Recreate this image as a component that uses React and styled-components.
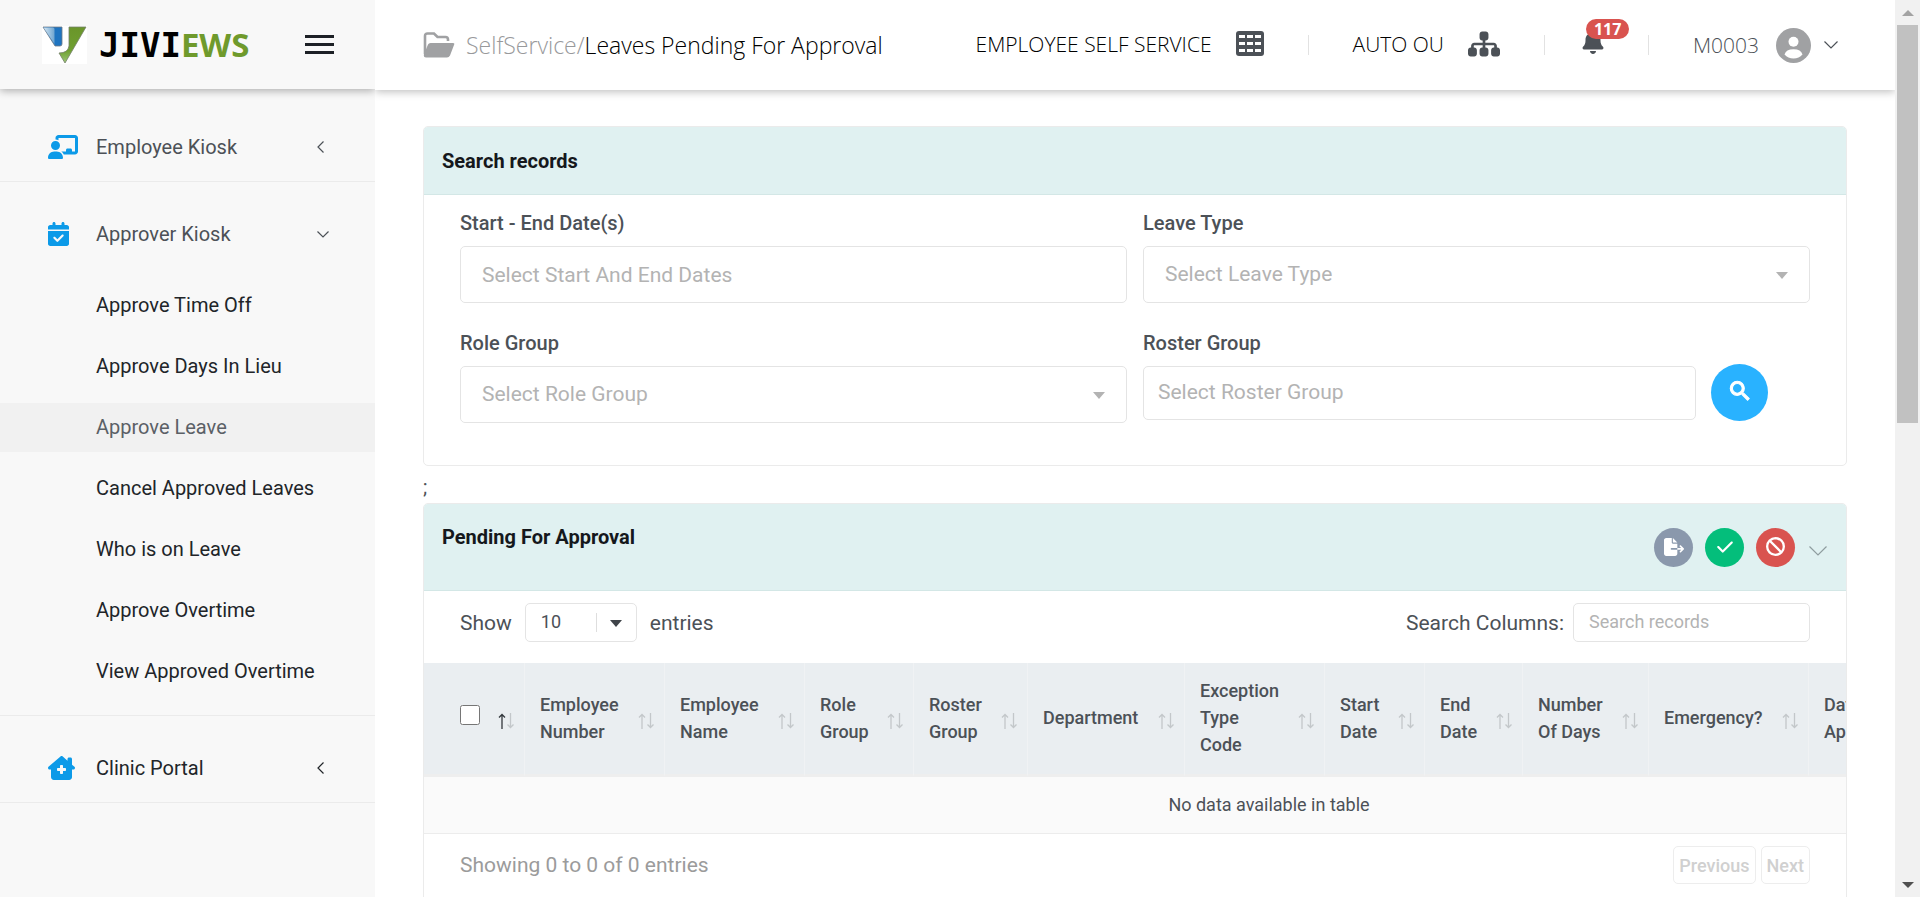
import React from "react";
import styled, { createGlobalStyle } from "styled-components";
import {
  FaChalkboardUser,
  FaCalendarCheck,
  FaHouseChimneyMedical,
  FaSitemap,
  FaBell,
  FaFileExport,
  FaCheck,
  FaBan,
} from "react-icons/fa6";
import { MdSearch } from "react-icons/md";

const GlobalStyle = createGlobalStyle`
  *, *::before, *::after { box-sizing: border-box; }
  html, body { margin: 0; padding: 0; }
  body {
    font-family: Roboto, "Liberation Sans", sans-serif;
    font-size: 20px;
    color: #4c5157;
    background: #fff;
  }
  button, input, select { font-family: inherit; }
  a { color: inherit; text-decoration: none; }
`;

const light = `"Open Sans", "Noto Sans", sans-serif`;

const Shell = styled.div`
  display: flex;
  height: 100vh;
  overflow: hidden;
`;

/* ---------- Sidebar ---------- */

const Sidebar = styled.aside`
  flex: 0 0 375px;
  background: #f8f8f8;
`;

const Brand = styled.div`
  display: flex;
  align-items: center;
  justify-content: space-between;
  height: 89px;
  padding: 0 41px 0 42px;
  box-shadow: 0 2px 8px rgba(0, 0, 0, 0.3);
  clip-path: inset(0 0 -12px 0);
`;

const Logo = styled.a`
  display: flex;
  align-items: center;
  gap: 12px;
  font-family: "DejaVu Sans Mono", monospace;
  font-size: 34px;
  font-weight: 700;
  line-height: 40px;
  color: #000;
`;

const LogoAccent = styled.span`
  font-family: "Noto Sans", "Open Sans", sans-serif;
  font-size: 33px;
  color: #6f9a2c;
`;

const MenuButton = styled.button`
  display: flex;
  flex-direction: column;
  gap: 5px;
  padding: 0;
  border: 0;
  background: none;
`;

const MenuBar = styled.span`
  width: 29px;
  height: 3px;
  background: #1d2026;
`;

const Nav = styled.nav`
  padding-top: 6px;
`;

const Group = styled.div`
  padding: 34px 0 ${(p) => (p.$open ? 19 : 16)}px;
  border-bottom: 1px solid #ebebeb;
`;

const GroupButton = styled.button`
  display: flex;
  align-items: center;
  width: 100%;
  height: 36px;
  padding: 0 46px 0 48px;
  border: 0;
  background: none;
  font-size: 20px;
  color: ${(p) => (p.$strong ? "#212529" : "#4c5157")};
  text-align: left;
`;

const GroupIcon = styled.span`
  display: flex;
  flex: 0 0 48px;
  color: #0c9ae8;
  svg {
    width: ${(p) => p.$w}px;
    height: 24px;
  }
`;

const GroupLabel = styled.span`
  flex: 1;
`;

const GroupArrow = styled.span`
  display: flex;
  flex: 0 0 12px;
`;

const SubList = styled.ul`
  display: flex;
  flex-direction: column;
  gap: 12px;
  margin: 29px 0 0;
  padding: 0;
  list-style: none;
`;

const SubLink = styled.a`
  display: block;
  padding-left: 96px;
  line-height: 49px;
  font-size: 20px;
  color: ${(p) => (p.$active ? "#5b6066" : "#212529")};
  background: ${(p) => (p.$active ? "#f1f1f1" : "transparent")};
`;

/* ---------- Top bar ---------- */

const Main = styled.main`
  flex: 1;
  min-width: 0;
`;

const TopBar = styled.header`
  display: flex;
  align-items: center;
  justify-content: space-between;
  height: 90px;
  padding: 0 57px 0 48px;
  box-shadow: 0 2px 8px rgba(0, 0, 0, 0.25);
  clip-path: inset(0 0 -12px 0);
`;

const Crumbs = styled.div`
  display: flex;
  align-items: center;
  gap: 11px;
  font-family: ${light};
  font-size: 23px;
  font-weight: 300;
  color: #000;
`;

const CrumbParent = styled.a`
  color: #98999b;
`;

const TopNav = styled.div`
  display: flex;
  align-items: center;
  font-family: ${light};
  font-weight: 300;
`;

const TopItem = styled.button`
  display: flex;
  align-items: center;
  gap: 24px;
  padding: 0 0 3px;
  border: 0;
  background: none;
  font-size: 21px;
  font-weight: 300;
  color: #000;
`;

const TopIcon = styled.span`
  display: flex;
  color: #4c5157;
`;

const Divider = styled.span`
  width: 1px;
  height: 20px;
  margin: 0 44px;
  background: #e2e2e2;
`;

const BellButton = styled.button`
  position: relative;
  display: flex;
  width: 49px;
  padding: 0 0 6px;
  margin: 0 -26px 0 -8px;
  border: 0;
  background: none;
  color: #4c5157;
`;

const Badge = styled.span`
  position: absolute;
  left: 5px;
  top: -11px;
  padding: 0 8px;
  border-radius: 10px;
  background: #d9534f;
  color: #fff;
  font-family: "Noto Sans", sans-serif;
  font-size: 16px;
  font-weight: 700;
  line-height: 20px;
`;

const UserButton = styled(TopItem)`
  gap: 17px;
  padding: 0;
  color: #4c5157;
`;

const UserTail = styled.span`
  display: flex;
  align-items: center;
  gap: 13px;
`;

/* ---------- Cards ---------- */

const Content = styled.div`
  padding: 36px 48px 0;
`;

const Card = styled.section`
  border: 1px solid #ebebeb;
  border-radius: 5px;
  background: #fff;
  overflow: hidden;
`;

const CardHead = styled.div`
  display: flex;
  justify-content: space-between;
  align-items: ${(p) => (p.$tall ? "flex-start" : "center")};
  height: ${(p) => (p.$tall ? 87 : 68)}px;
  padding: ${(p) => (p.$tall ? "19px 19px 0 18px" : "0 18px")};
  border-bottom: 1px solid #d3e7e6;
  background: #e0f1f1;
`;

const CardTitle = styled.h2`
  margin: 0;
  font-size: 20px;
  font-weight: 700;
  line-height: 28px;
  color: #15181c;
`;

const SearchForm = styled.form`
  display: grid;
  grid-template-columns: 1fr 1fr;
  gap: 28px 16px;
  padding: 16px 36px 42px;
`;

const Field = styled.div`
  display: flex;
  flex-direction: column;
  gap: 10px;
`;

const Label = styled.label`
  font-size: 20px;
  font-weight: 500;
  line-height: 25px;
`;

const boxLook = `
  width: 100%;
  border: 1px solid #e4e4e4;
  border-radius: 5px;
  background: #fff;
  color: #b3b3b3;
  font-size: 21px;
  &::placeholder { color: #b3b3b3; opacity: 1; }
`;

const TextBox = styled.input`
  ${boxLook}
  height: ${(p) => (p.$compact ? 54 : 57)}px;
  padding: 0 ${(p) => (p.$compact ? 14 : 21)}px ${(p) => (p.$compact ? 2 : 0)}px;
`;

const SelectWrap = styled.div`
  position: relative;
`;

const SelectBox = styled.select`
  ${boxLook}
  display: block;
  height: 57px;
  padding: 0 52px 2px 21px;
  appearance: none;
`;

const Caret = styled.span`
  position: absolute;
  right: ${(p) => (p.$dark ? 15 : 22)}px;
  top: 50%;
  margin-top: -3px;
  border: 6px solid transparent;
  border-top: 7px solid ${(p) => (p.$dark ? "#3f4449" : "#b3b3b3")};
  border-bottom: 0;
  pointer-events: none;
`;

const SearchRow = styled.div`
  display: grid;
  grid-template-columns: 1fr 57px;
  column-gap: 15px;
  padding-right: 42px;
`;

const SearchButton = styled.button`
  display: flex;
  align-items: center;
  justify-content: center;
  width: 57px;
  height: 57px;
  margin-top: -2px;
  padding: 0 0 3px;
  border: 0;
  border-radius: 50%;
  background: #29b2ff;
  color: #fff;
  path:last-child {
    stroke: currentColor;
    stroke-width: 1px;
  }
  path[fill="none"] {
    stroke: none;
  }
`;

const Stray = styled.div`
  height: 37px;
  padding-top: 8px;
  font-size: 20px;
  line-height: 27px;
`;

const Actions = styled.div`
  display: flex;
  align-items: center;
  gap: 12px;
  margin-top: 5px;
`;

const RoundButton = styled.button`
  display: flex;
  align-items: center;
  justify-content: center;
  width: 39px;
  height: 39px;
  padding: 0 0 2px;
  border: 0;
  border-radius: 50%;
  background: ${(p) => p.$bg};
  color: #fff;
`;

const CollapseButton = styled.button`
  display: flex;
  padding: 6px 0 0;
  margin: 0 0 0 2px;
  border: 0;
  background: none;
  color: #8f9d9f;
`;

/* ---------- Table ---------- */

const TableBar = styled.div`
  display: flex;
  align-items: center;
  justify-content: space-between;
  padding: 12px 36px 21px;
  font-size: 21px;
`;

const BarPart = styled.div`
  display: flex;
  align-items: center;
  gap: ${(p) => p.$gap}px;
`;

const LengthWrap = styled.div`
  position: relative;
  width: 112px;
  &::before {
    content: "";
    position: absolute;
    left: 71px;
    top: 10px;
    width: 1px;
    height: 19px;
    background: #dedede;
  }
`;

const LengthSelect = styled.select`
  display: block;
  width: 100%;
  height: 39px;
  padding: 0 15px 2px;
  border: 1px solid #e4e4e4;
  border-radius: 5px;
  background: #fff;
  color: #4c5157;
  font-size: 18px;
  appearance: none;
`;

const ColumnSearch = styled.input`
  width: 237px;
  height: 39px;
  padding: 0 15px 2px;
  border: 1px solid #e4e4e4;
  border-radius: 5px;
  font-size: 18px;
  &::placeholder { color: #b3b3b3; opacity: 1; }
`;

const TableScroll = styled.div`
  overflow: hidden;
`;

const Table = styled.table`
  width: 1690px;
  table-layout: fixed;
  border-collapse: separate;
  border-spacing: 0;
  font-size: 18px;
`;

const Th = styled.th`
  height: 114px;
  padding: 0 10px 2px 15px;
  border-right: 1px solid #f0f2f4;
  border-bottom: 3px solid #eeeeee;
  background: #eaeef1;
  font-weight: 500;
  line-height: 27px;
  text-align: left;
  &:first-child { padding-left: 36px; }
`;

const ThInner = styled.div`
  display: flex;
  align-items: center;
  justify-content: space-between;
  svg { margin-top: 6px; }
`;

const ThText = styled.span`
  white-space: pre-line;
`;

const Check = styled.input`
  width: 20px;
  height: 20px;
  margin: 0 0 6px;
`;

const EmptyCell = styled.td`
  height: 57px;
  padding: 0 0 2px;
  border-bottom: 1px solid #ececec;
  background: #fafafa;
  text-align: center;
`;

const TableFoot = styled.div`
  display: flex;
  align-items: center;
  justify-content: space-between;
  padding: 12px 36px 40px;
  font-size: 21px;
  color: #9b9b9b;
`;

const Pager = styled.div`
  display: flex;
  gap: 5px;
`;

const PageButton = styled.button`
  height: 38px;
  padding: 0 5px;
  border: 1px solid #ededed;
  border-radius: 5px;
  background: #fff;
  color: #d0d0d0;
  font-size: 18px;
  font-weight: 500;
`;

/* ---------- Scrollbar ---------- */

const ScrollTrack = styled.div`
  display: flex;
  flex: 0 0 25px;
  flex-direction: column;
  align-items: center;
  background: #f1f1f1;
`;

const ScrollEnd = styled.span`
  display: flex;
  flex: 0 0 25px;
  align-items: center;
  color: ${(p) => p.$color};
`;

const ScrollRail = styled.div`
  flex: 1;
  width: 21px;
`;

const ScrollThumb = styled.div`
  height: 47%;
  background: #c1c1c1;
`;

/* ---------- Drawings ---------- */

const Chevron = ({ dir = "down", w = 13, h = 8, stroke = 1.2 }) => (
  <svg width={w} height={h} viewBox={`0 0 ${w} ${h}`} fill="none" stroke="currentColor" strokeWidth={stroke}>
    {dir === "down" ? (
      <path d={`M0.5 0.5 L${w / 2} ${h - 1} L${w - 0.5} 0.5`} />
    ) : (
      <path d={`M${w - 0.5} 0.5 L1 ${h / 2} L${w - 0.5} ${h - 0.5}`} />
    )}
  </svg>
);

const LogoMark = () => (
  <svg width="45" height="38" viewBox="0 0 45 38">
    <defs>
      <linearGradient id="markBlue" x1="0" x2="1">
        <stop offset="0" stopColor="#d4e6f3" />
        <stop offset="1" stopColor="#6fa5cf" />
      </linearGradient>
      <linearGradient id="markGreen" x1="0" y1="0" x2="0" y2="1">
        <stop offset="0" stopColor="#6a952a" />
        <stop offset="0.65" stopColor="#6f9f31" />
        <stop offset="1" stopColor="#9cc777" />
      </linearGradient>
    </defs>
    <rect width="45" height="38" fill="#fff" />
    <path d="M1 1H20V18Q20 20 18 20H13Z" fill="#1f74c0" stroke="#707a84" strokeWidth="0.8" />
    <path d="M1.5 1.5H11Q12.5 1.5 12.5 3V18Z" fill="url(#markBlue)" />
    <path d="M27 1H44L23 37L17 27Q26 27 27 20Z" fill="url(#markGreen)" stroke="#75806a" strokeWidth="0.8" />
  </svg>
);

const FolderIcon = () => (
  <svg width="32" height="26" viewBox="0 0 32 26">
    <path d="M2 22V4Q2 1.5 4.5 1.5H11L14.5 5H22.5Q25 5 25 7.5V9" fill="none" stroke="#a0a1a3" strokeWidth="2.6" />
    <path d="M7.5 11H30Q32 11 31 13L27 23.5Q26 25.5 24 25.5H3Q0.7 25.5 0.7 23L5 12.5Q5.7 11 7.5 11Z" fill="#a0a1a3" />
  </svg>
);

const GridIcon = () => (
  <svg width="28" height="25" viewBox="0 0 28 25">
    <rect width="28" height="25" rx="3" fill="currentColor" />
    {[4, 11, 18].map((y) =>
      [3, 11, 19].map((x) => <rect key={`${x}-${y}`} x={x} y={y} width="6" height="3" fill="#fff" />)
    )}
  </svg>
);

const AvatarIcon = () => (
  <svg width="35" height="35" viewBox="0 0 35 35">
    <circle cx="17.5" cy="17.5" r="17.5" fill="#a0a1a3" />
    <circle cx="17.5" cy="13.7" r="5" fill="#fff" />
    <path d="M8.5 26.5Q10 21.3 17.5 21.3Q25 21.3 26.5 26.5Q23 30.5 17.5 30.5Q12 30.5 8.5 26.5Z" fill="#fff" />
  </svg>
);

const SortIcon = ({ up }) => (
  <svg width="16" height="16" viewBox="0 0 16 16" fill="none" strokeWidth="1.3">
    <path d="M4 16V1.5M1 4.5L4 1.5L7 4.5" stroke={up ? "#33383d" : "#c3c7ca"} />
    <path d="M12.5 0V14.5M9.5 11.5L12.5 14.5L15.5 11.5" stroke="#c3c7ca" />
  </svg>
);

const ScrollArrow = ({ down }) => (
  <svg width="12" height="6" viewBox="0 0 12 6">
    <path d={down ? "M0 0H12L6 6Z" : "M0 6H12L6 0Z"} fill="currentColor" />
  </svg>
);

/* ---------- Data ---------- */

const approverLinks = [
  "Approve Time Off",
  "Approve Days In Lieu",
  "Approve Leave",
  "Cancel Approved Leaves",
  "Who is on Leave",
  "Approve Overtime",
  "View Approved Overtime",
];

const columns = [
  ["Employee\nNumber", 140],
  ["Employee\nName", 140],
  ["Role\nGroup", 109],
  ["Roster\nGroup", 114],
  ["Department", 157],
  ["Exception\nType\nCode", 140],
  ["Start\nDate", 100],
  ["End\nDate", 98],
  ["Number\nOf Days", 126],
  ["Emergency?", 160],
  ["Date\nApplied", 305],
];

const NavGroup = ({ icon, iconWidth, label, open, strong, children }) => (
  <Group $open={open}>
    <GroupButton type="button" $strong={strong} aria-expanded={!!open}>
      <GroupIcon $w={iconWidth}>{icon}</GroupIcon>
      <GroupLabel>{label}</GroupLabel>
      <GroupArrow>
        {open ? <Chevron w={12} h={7} /> : <Chevron dir="left" w={7} h={12} />}
      </GroupArrow>
    </GroupButton>
    {children}
  </Group>
);

export default function App() {
  return (
    <>
      <GlobalStyle />
      <Shell>
        <Sidebar>
          <Brand>
            <Logo href="#home">
              <LogoMark />
              <span>
                JIVI<LogoAccent>EWS</LogoAccent>
              </span>
            </Logo>
            <MenuButton type="button" aria-label="Toggle menu">
              <MenuBar />
              <MenuBar />
              <MenuBar />
            </MenuButton>
          </Brand>
          <Nav>
            <NavGroup icon={<FaChalkboardUser />} iconWidth={30} label="Employee Kiosk" />
            <NavGroup icon={<FaCalendarCheck />} iconWidth={21} label="Approver Kiosk" open>
              <SubList>
                {approverLinks.map((t) => (
                  <li key={t}>
                    <SubLink href="#approver" $active={t === "Approve Leave"}>
                      {t}
                    </SubLink>
                  </li>
                ))}
              </SubList>
            </NavGroup>
            <NavGroup icon={<FaHouseChimneyMedical />} iconWidth={27} label="Clinic Portal" strong />
          </Nav>
        </Sidebar>

        <Main>
          <TopBar>
            <Crumbs>
              <FolderIcon />
              <span>
                <CrumbParent href="#self">SelfService/</CrumbParent>Leaves Pending For Approval
              </span>
            </Crumbs>
            <TopNav>
              <TopItem type="button">
                EMPLOYEE SELF SERVICE
                <TopIcon>
                  <GridIcon />
                </TopIcon>
              </TopItem>
              <Divider />
              <TopItem type="button">
                AUTO OU
                <TopIcon>
                  <FaSitemap size={32} />
                </TopIcon>
              </TopItem>
              <Divider />
              <BellButton type="button" aria-label="Notifications">
                <FaBell size={24} />
                <Badge>117</Badge>
              </BellButton>
              <Divider />
              <UserButton type="button">
                M0003
                <UserTail>
                  <AvatarIcon />
                  <Chevron w={14} h={8} />
                </UserTail>
              </UserButton>
            </TopNav>
          </TopBar>

          <Content>
            <Card>
              <CardHead>
                <CardTitle>Search records</CardTitle>
              </CardHead>
              <SearchForm>
                <Field>
                  <Label htmlFor="dates">Start - End Date(s)</Label>
                  <TextBox id="dates" placeholder="Select Start And End Dates" />
                </Field>
                <Field>
                  <Label htmlFor="leave">Leave Type</Label>
                  <SelectWrap>
                    <SelectBox id="leave">
                      <option>Select Leave Type</option>
                    </SelectBox>
                    <Caret />
                  </SelectWrap>
                </Field>
                <Field>
                  <Label htmlFor="role">Role Group</Label>
                  <SelectWrap>
                    <SelectBox id="role">
                      <option>Select Role Group</option>
                    </SelectBox>
                    <Caret />
                  </SelectWrap>
                </Field>
                <Field>
                  <Label htmlFor="roster">Roster Group</Label>
                  <SearchRow>
                    <TextBox id="roster" $compact placeholder="Select Roster Group" />
                    <SearchButton type="button" aria-label="Search">
                      <MdSearch size={26} />
                    </SearchButton>
                  </SearchRow>
                </Field>
              </SearchForm>
            </Card>
            <Stray>;</Stray>
            <Card>
              <CardHead $tall>
                <CardTitle>Pending For Approval</CardTitle>
                <Actions>
                  <RoundButton type="button" $bg="#8a98ac" aria-label="Export">
                    <FaFileExport size={20} />
                  </RoundButton>
                  <RoundButton type="button" $bg="#04be7b" aria-label="Approve">
                    <FaCheck size={18} />
                  </RoundButton>
                  <RoundButton type="button" $bg="#d9534f" aria-label="Reject">
                    <FaBan size={19} />
                  </RoundButton>
                  <CollapseButton type="button" aria-label="Collapse">
                    <Chevron w={18} h={10} />
                  </CollapseButton>
                </Actions>
              </CardHead>
              <TableBar>
                <BarPart $gap={13}>
                  <label htmlFor="length">Show</label>
                  <LengthWrap>
                    <LengthSelect id="length">
                      <option>10</option>
                    </LengthSelect>
                    <Caret $dark />
                  </LengthWrap>
                  <span>entries</span>
                </BarPart>
                <BarPart $gap={9}>
                  <label htmlFor="colsearch">Search Columns:</label>
                  <ColumnSearch id="colsearch" placeholder="Search records" />
                </BarPart>
              </TableBar>
              <TableScroll>
                <Table>
                  <colgroup>
                    <col style={{ width: 101 }} />
                    {columns.map(([t, w]) => (
                      <col key={t} style={{ width: w }} />
                    ))}
                  </colgroup>
                  <thead>
                    <tr>
                      <Th>
                        <ThInner>
                          <Check type="checkbox" aria-label="Select all" />
                          <SortIcon up />
                        </ThInner>
                      </Th>
                      {columns.map(([t]) => (
                        <Th key={t}>
                          <ThInner>
                            <ThText>{t}</ThText>
                            <SortIcon />
                          </ThInner>
                        </Th>
                      ))}
                    </tr>
                  </thead>
                  <tbody>
                    <tr>
                      <EmptyCell colSpan={12}>No data available in table</EmptyCell>
                    </tr>
                  </tbody>
                </Table>
              </TableScroll>
              <TableFoot>
                <span>Showing 0 to 0 of 0 entries</span>
                <Pager>
                  <PageButton type="button">Previous</PageButton>
                  <PageButton type="button">Next</PageButton>
                </Pager>
              </TableFoot>
            </Card>
          </Content>
        </Main>

        <ScrollTrack aria-hidden="true">
          <ScrollEnd $color="#a3a3a3">
            <ScrollArrow />
          </ScrollEnd>
          <ScrollRail>
            <ScrollThumb />
          </ScrollRail>
          <ScrollEnd $color="#505050">
            <ScrollArrow down />
          </ScrollEnd>
        </ScrollTrack>
      </Shell>
    </>
  );
}
